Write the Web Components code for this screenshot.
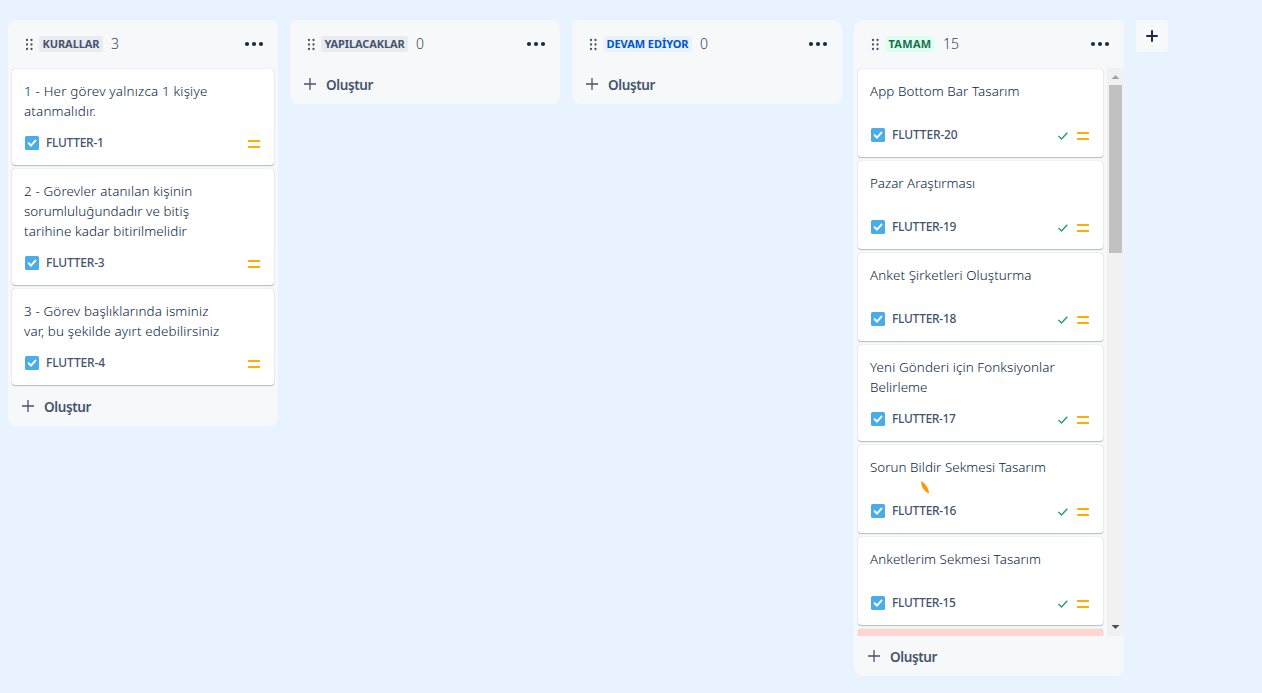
<!DOCTYPE html>
<html lang="tr">
<head>
<meta charset="utf-8">
<title>Pano</title>
<style>
html,body{margin:0;height:100%;overflow:hidden;background:#e9f2ff}
body{font-family:"Noto Sans","Open Sans",sans-serif;color:#091e42;font-size:13.4px;font-weight:360;line-height:20px}
</style>
</head>
<body>
<kanban-board>
  <board-column label="KURALLAR" label-width="57" count="3">
    <task-card key="FLUTTER-1" key-width="57.5"><text-line width="183.5">1 - Her görev yalnızca 1 kişiye</text-line><text-line width="72">atanmalıdır.</text-line></task-card>
    <task-card key="FLUTTER-3" key-width="58.5"><text-line width="168.5">2 - Görevler atanılan kişinin</text-line><text-line width="165">sorumluluğundadır ve bitiş</text-line><text-line width="163">tarihine kadar bitirilmelidir</text-line></task-card>
    <task-card key="FLUTTER-4" key-width="59"><text-line width="184.5">3 - Görev başlıklarında isminiz</text-line><text-line width="195.500">var, bu şekilde ayırt edebilirsiniz</text-line></task-card>
  </board-column>
  <board-column label="YAPILACAKLAR" label-width="80" count="0"></board-column>
  <board-column label="DEVAM EDİYOR" label-width="82" count="0" tone="progress"></board-column>
  <board-column label="TAMAM" label-width="43" count="15" tone="done" scrolls>
    <task-card done key="FLUTTER-20" key-width="65.5"><text-line width="149.5">App Bottom Bar Tasarım</text-line></task-card>
    <task-card done key="FLUTTER-19" key-width="64"><text-line width="105">Pazar Araştırması</text-line></task-card>
    <task-card done key="FLUTTER-18" key-width="64"><text-line width="161.500">Anket Şirketleri Oluşturma</text-line></task-card>
    <task-card done key="FLUTTER-17" key-width="63.5"><text-line width="185">Yeni Gönderi için Fonksiyonlar</text-line><text-line width="57.500">Belirleme</text-line></task-card>
    <task-card done mark key="FLUTTER-16" key-width="64"><text-line width="176">Sorun Bildir Sekmesi Tasarım</text-line></task-card>
    <task-card done key="FLUTTER-15" key-width="63.5"><text-line width="171">Anketlerim Sekmesi Tasarım</text-line></task-card>
    <task-card flagged></task-card>
  </board-column>
  <add-column></add-column>
</kanban-board>
<script>
class BaseElement extends HTMLElement {
  constructor() { super(); this.attachShadow({ mode: "open" }); }
  paint(html) { this.shadowRoot.innerHTML = html; }
}

// One line of text, tracked so that it fills its given width.
class TextLine extends BaseElement {
  connectedCallback() {
    this.paint(`<style>:host{display:block;white-space:nowrap}span{display:inline-block}</style><span><slot></slot></span>`);
    const span = this.shadowRoot.querySelector("span");
    const target = parseFloat(this.getAttribute("width"));
    const length = this.textContent.length;
    if (target && length) {
      const natural = span.getBoundingClientRect().width;
      if (natural) span.style.letterSpacing = ((target - natural) / length).toFixed(3) + "px";
    }
  }
}

class KanbanBoard extends BaseElement {
  connectedCallback() {
    this.paint(`<style>:host{display:flex;gap:12px;align-items:flex-start;padding:20px 8px 0}</style><slot></slot>`);
  }
}

class AddColumn extends BaseElement {
  connectedCallback() {
    this.paint(`<style>:host{display:grid;place-items:center;width:32px;height:32px;border-radius:3px;background:#f7f8f9}svg{display:block}</style>
    <svg width="32" height="32"><path d="M16 11v10M11 16h10" stroke="#172b4d" stroke-width="2" stroke-linecap="round"/></svg>`);
  }
}

class ScrollTrack extends BaseElement {
  connectedCallback() {
    this.paint(`<style>:host{display:flex;flex-direction:column;width:17px;flex:none;background:#f1f1f1}
    .thumb{height:168px;margin:0 2px;background:#c1c1c1}.space{flex:1}svg{display:block}</style>
    <svg width="17" height="17"><path d="M4.5 11h8L8.500 7z" fill="#a3a3a3"/></svg><div class="thumb"></div><div class="space"></div>
    <svg width="17" height="17"><path d="M4.500 6h8L8.500 10z" fill="#505050"/></svg>`);
  }
}

class BoardColumn extends BaseElement {
  connectedCallback() {
    const scrolls = this.hasAttribute("scrolls");
    const filled = this.children.length > 0 || this.getAttribute("count") !== "0";
    const dots = [2, 6.5, 11].map(y => `<circle cx="2" cy="${y}" r="1.15"/><circle cx="6.500" cy="${y}" r="1.15"/>`).join("");
    this.paint(`<style>
    :host{display:block;width:270px;border-radius:8px;background:#f7f8f9}
    header{display:flex;align-items:center;height:48px;padding:0 12px 0 17px}
    header svg{display:block;flex:none}
    .badge{margin-left:5px;padding:0 3.500px;height:16px;border-radius:3px;background:#e9ebef;color:#44546f;font-size:11px;font-weight:700;line-height:16px}
    :host([tone=progress]) .badge{background:#e9f2ff;color:#0055cc}
    :host([tone=done]) .badge{background:#dcfff1;color:#216e4e}
    .count{margin-left:8px;color:#344563;font-size:14px;line-height:20px}
    .more{margin-left:auto}
    .body{display:flex;margin-top:${filled ? 0 : -4}px;${scrolls ? "height:568px" : ""}}
    .list{flex:1;display:flex;flex-direction:column;gap:4px;padding:${filled ? "1px 4px" : "0 4px"};overflow:${scrolls ? "hidden" : "visible"}}
    footer{display:flex;align-items:center;height:40px;padding-left:13px;gap:9px;color:#44546f;font-size:13.5px;font-weight:570}
    footer text-line{padding-top:2px}
    footer svg{display:block}
    </style>
    <header><svg width="9" height="13" fill="#44546f">${dots}</svg>
    <div class="badge"><text-line width="${this.getAttribute("label-width")}">${this.getAttribute("label")}</text-line></div>
    <span class="count">${this.getAttribute("count")}</span>
    <svg class="more" width="24" height="24" fill="#172b4d"><circle cx="5" cy="12" r="2.100"/><circle cx="12" cy="12" r="2.100"/><circle cx="19" cy="12" r="2.100"/></svg></header>
    <div class="body"><div class="list"><slot></slot></div>${scrolls ? "<scroll-track></scroll-track>" : ""}</div>
    <footer><svg width="14" height="14"><path d="M7 1v12M1 7h12" stroke="#44546f" stroke-width="1.300"/></svg><text-line width="47">Oluştur</text-line></footer>`);
  }
}

class TaskCard extends BaseElement {
  connectedCallback() {
    const flagged = this.hasAttribute("flagged");
    const done = this.hasAttribute("done") ? `<svg class="done" width="12" height="10"><path d="M1.500 5l3 3 5.800-6.200" fill="none" stroke="#22a06b" stroke-width="1.400"/></svg>` : "";
    const mark = this.hasAttribute("mark") ? `<svg class="mark" width="9" height="13"><path d="M.3 .6C3 .6 8.300 8.500 8 12.300 5 12.300 -.3 6 .3 .6z" fill="#ff9900"/></svg>` : "";
    this.paint(`<style>
    :host{display:block;position:relative;flex:none;box-sizing:border-box;border-radius:3px;background:${flagged ? "#ffd5d2" : "#fff"};box-shadow:0 1px 1px rgba(9,30,66,.25),0 0 1px rgba(9,30,66,.31)}
    .title{min-height:32px;padding:12px 12px 0}
    .foot{display:flex;align-items:center;height:44px;padding:0 13px}
    .key{margin-left:7px;color:#44546f;font-size:12px;font-weight:480;line-height:16px}
    .medium{margin-left:7px}.done{margin-left:auto}:host(:not([done])) .medium{margin-left:auto}
    .medium,.done{padding-top:2px}
    svg{display:block}
    .mark{position:absolute;left:63px;top:36px}
    </style>
    <div class="title"><slot></slot></div>${mark}
    <div class="foot">${flagged ? "" : `<svg width="14" height="14"><rect width="14" height="14" rx="1.500" fill="#4bade8"/><path d="M3.700 7.300l2.300 2.300 4.400-5" fill="none" stroke="#fff" stroke-width="2" stroke-linecap="round"/></svg>
    <text-line class="key" width="${this.getAttribute("key-width")}">${this.getAttribute("key")}</text-line>${done}
    <svg class="medium" width="14" height="10" fill="#ffab00"><rect x="1" y="1" width="12" height="2" rx=".6"/><rect x="1" y="7" width="12" height="2" rx=".6"/></svg>`}</div>`);
  }
}

customElements.define("text-line", TextLine);
customElements.define("scroll-track", ScrollTrack);
customElements.define("task-card", TaskCard);
customElements.define("board-column", BoardColumn);
customElements.define("add-column", AddColumn);
customElements.define("kanban-board", KanbanBoard);
</script>
</body>
</html>
